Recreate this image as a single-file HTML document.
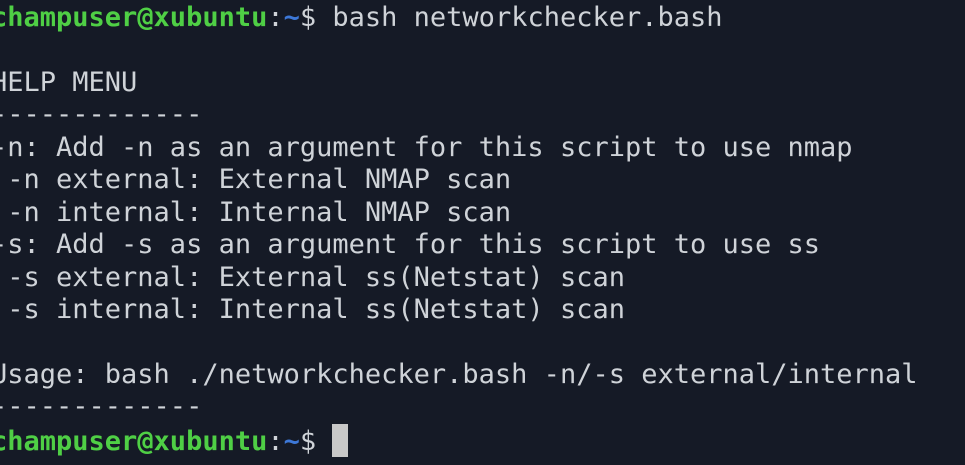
<!DOCTYPE html>
<html><head><meta charset="utf-8"><style>
html,body{margin:0;padding:0;background:#151a26;width:965px;height:465px;overflow:hidden}
pre{position:absolute;left:-9px;top:2px;margin:0;font-family:"DejaVu Sans Mono","Liberation Mono",monospace;font-size:27px;line-height:32.45px;color:#cfd3d8;white-space:pre}
.g{color:#4fcf45;font-weight:bold}
.b{color:#3d78d8;font-weight:bold}
.c{display:inline-block;width:16px;height:33px;background:#c8c8c8;vertical-align:-7px}
</style></head><body>
<pre><span class="g">champuser@xubuntu</span>:<span class="b">~</span>$ bash networkchecker.bash

HELP MENU
-------------
-n: Add -n as an argument for this script to use nmap
 -n external: External NMAP scan
 -n internal: Internal NMAP scan
-s: Add -s as an argument for this script to use ss
 -s external: External ss(Netstat) scan
 -s internal: Internal ss(Netstat) scan

Usage: bash ./networkchecker.bash -n/-s external/internal
-------------
<span class="g">champuser@xubuntu</span>:<span class="b">~</span>$ <span class="c"></span></pre>
</body></html>
